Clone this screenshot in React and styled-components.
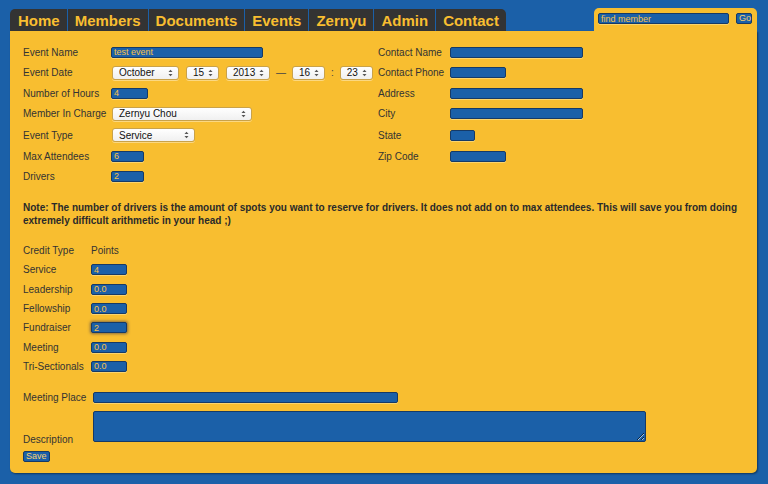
import React from 'react';
import styled, { createGlobalStyle } from 'styled-components';

const GlobalStyle = createGlobalStyle`
  html, body {
    margin: 0;
    padding: 0;
    background: #1b60a8;
    font-family: "Liberation Sans", Arial, sans-serif;
  }
`;

const Page = styled.div`
  width: 747px;
  padding: 8px 11px 12px 10px;
`;

const Header = styled.div`
  display: flex;
  justify-content: space-between;
  align-items: flex-end;
  height: 23px;
`;

const Nav = styled.nav`
  display: flex;
  gap: 1px;
  height: 22px;
`;

const Tab = styled.a`
  display: flex;
  align-items: center;
  padding: 0 7px;
  background: #333333;
  color: #f8be30;
  font-size: 15px;
  font-weight: bold;
  text-decoration: none;
  &:first-child { border-top-left-radius: 5px; padding-left: 8px; }
  &:last-child { border-top-right-radius: 5px; }
`;

const SearchTab = styled.div`
  display: flex;
  align-items: flex-start;
  gap: 7px;
  width: 154px;
  height: 18px;
  padding: 5px 5px 0 4px;
  background: #f8be30;
  border-radius: 5px 5px 0 0;
`;

const Panel = styled.div`
  background: #f8be30;
  border-radius: 0 0 5px 5px;
  box-shadow: 1px 1px 2px rgba(0, 0, 0, 0.45);
  padding: 11px 13px 11px 13px;
  color: #333;
  font-size: 10px;
`;

const TopGrid = styled.div`
  display: grid;
  grid-template-columns: 88px 267px 72px 1fr;
  grid-template-rows: 20px 21px 20px 21px 22px 20px 20px;
  align-items: center;
`;

const Label = styled.span`
  font-size: 10px;
  color: #333;
  white-space: nowrap;
`;

const Input = styled.input`
  box-sizing: border-box;
  width: ${p => p.$w}px;
  height: 11px;
  padding: 0 2px;
  background: #1b60a8;
  border: 1px solid #163a66;
  border-radius: 2px;
  color: #f5c24a;
  font-family: "Liberation Sans", Arial, sans-serif;
  font-size: 9px;
  outline: none;
  box-shadow: ${p => (p.$focus ? '0 0 3px 1px rgba(40, 40, 80, 0.55)' : '0 1px 0 rgba(255, 235, 170, 0.5)')};
`;

const TextArea = styled.textarea`
  box-sizing: border-box;
  width: 553px;
  height: 31px;
  background: #1b60a8;
  border: 1px solid #163a66;
  border-radius: 2px;
  resize: both;
  margin: 0;
  display: block;
`;

const FakeSelect = styled.span`
  box-sizing: border-box;
  display: inline-flex;
  align-items: center;
  justify-content: space-between;
  width: ${p => p.$w}px;
  height: 14px;
  padding: 0 5px 0 6px;
  background: linear-gradient(#ffffff, #f0f0f0);
  border: 1px solid #c9a24a;
  border-radius: 3px;
  color: #111;
  font-size: 10px;
  box-shadow: 0 1px 0 rgba(255, 255, 255, 0.4);
`;

const DateRow = styled.div`
  display: flex;
  align-items: center;
  gap: 7px;
  padding-left: 1px;
`;

const Sep = styled.span`
  color: #444;
  font-size: 10px;
  margin: 0 -1px;
`;

const Note = styled.p`
  margin: 15px 0 0;
  font-size: 10px;
  font-weight: bold;
  line-height: 13px;
  color: #2a2a2a;
`;

const CreditGrid = styled.div`
  display: grid;
  grid-template-columns: 68px 1fr;
  grid-auto-rows: 19.3px;
  align-items: center;
  margin-top: 14px;
`;

const FieldRow = styled.div`
  display: flex;
  align-items: ${p => p.$align || 'center'};
  gap: 6px;
  margin-top: ${p => p.$mt || 0}px;
`;

const WideLabel = styled(Label)`
  width: 64px;
  line-height: 11px;
  margin-bottom: ${p => p.$drop || 0}px;
`;

const SmallButton = styled.button`
  box-sizing: border-box;
  height: 11px;
  padding: 0 2px;
  background: #1b60a8;
  border: 1px solid #163a66;
  border-radius: 2px;
  color: #f8d070;
  font-family: "Liberation Sans", Arial, sans-serif;
  font-size: 9px;
  line-height: 9px;
  cursor: pointer;
`;

const Arrows = () => (
  <svg width="5" height="8" viewBox="0 0 5 8">
    <path d="M0.5 3 L2.5 0.8 L4.5 3 Z" fill="#555" />
    <path d="M0.5 5 L2.5 7.2 L4.5 5 Z" fill="#555" />
  </svg>
);

const Select = ({ w, children }) => (
  <FakeSelect $w={w}>
    <span>{children}</span>
    <Arrows />
  </FakeSelect>
);

const tabs = ['Home', 'Members', 'Documents', 'Events', 'Zernyu', 'Admin', 'Contact'];

const credits = [
  ['Service', '4'],
  ['Leadership', '0.0'],
  ['Fellowship', '0.0'],
  ['Fundraiser', '2', true],
  ['Meeting', '0.0'],
  ['Tri-Sectionals', '0.0'],
];

const App = () => {
  return (
    <Page>
      <GlobalStyle />
      <Header>
        <Nav>
          {tabs.map(t => <Tab key={t} href="#">{t}</Tab>)}
        </Nav>
        <SearchTab>
          <Input $w={132} defaultValue="find member" />
          <SmallButton style={{ width: 16 }}>Go</SmallButton>
        </SearchTab>
      </Header>
      <Panel>
        <TopGrid>
          <Label>Event Name</Label>
          <Input $w={152} defaultValue="test event" />
          <Label>Contact Name</Label>
          <Input $w={133} />

          <Label>Event Date</Label>
          <DateRow>
            <Select w={67}>October</Select>
            <Select w={33}>15</Select>
            <Select w={44}>2013</Select>
            <Sep>—</Sep>
            <Select w={33}>16</Select>
            <Sep>:</Sep>
            <Select w={33}>23</Select>
          </DateRow>
          <Label>Contact Phone</Label>
          <Input $w={56} />

          <Label>Number of Hours</Label>
          <Input $w={37} defaultValue="4" />
          <Label>Address</Label>
          <Input $w={133} />

          <Label>Member In Charge</Label>
          <DateRow><Select w={140}>Zernyu Chou</Select></DateRow>
          <Label>City</Label>
          <Input $w={133} />

          <Label>Event Type</Label>
          <DateRow><Select w={83}>Service</Select></DateRow>
          <Label>State</Label>
          <Input $w={25} />

          <Label>Max Attendees</Label>
          <Input $w={33} defaultValue="6" />
          <Label>Zip Code</Label>
          <Input $w={56} />

          <Label>Drivers</Label>
          <Input $w={33} defaultValue="2" />
        </TopGrid>

        <Note>
          Note: The number of drivers is the amount of spots you want to reserve for drivers. It does not add on to max attendees. This will save you from doing extremely difficult arithmetic in your head ;)
        </Note>

        <CreditGrid>
          <Label>Credit Type</Label>
          <Label>Points</Label>
          {credits.map(([name, val, focus]) => (
            <React.Fragment key={name}>
              <Label>{name}</Label>
              <Input $w={36} defaultValue={val} $focus={focus} />
            </React.Fragment>
          ))}
        </CreditGrid>

        <FieldRow $mt={16}>
          <WideLabel>Meeting Place</WideLabel>
          <Input $w={305} />
        </FieldRow>
        <FieldRow $align="flex-end" $mt={8}>
          <WideLabel $drop={-3}>Description</WideLabel>
          <TextArea />
        </FieldRow>
        <FieldRow $mt={9}>
          <SmallButton>Save</SmallButton>
        </FieldRow>
      </Panel>
    </Page>
  );
};

export default App;
